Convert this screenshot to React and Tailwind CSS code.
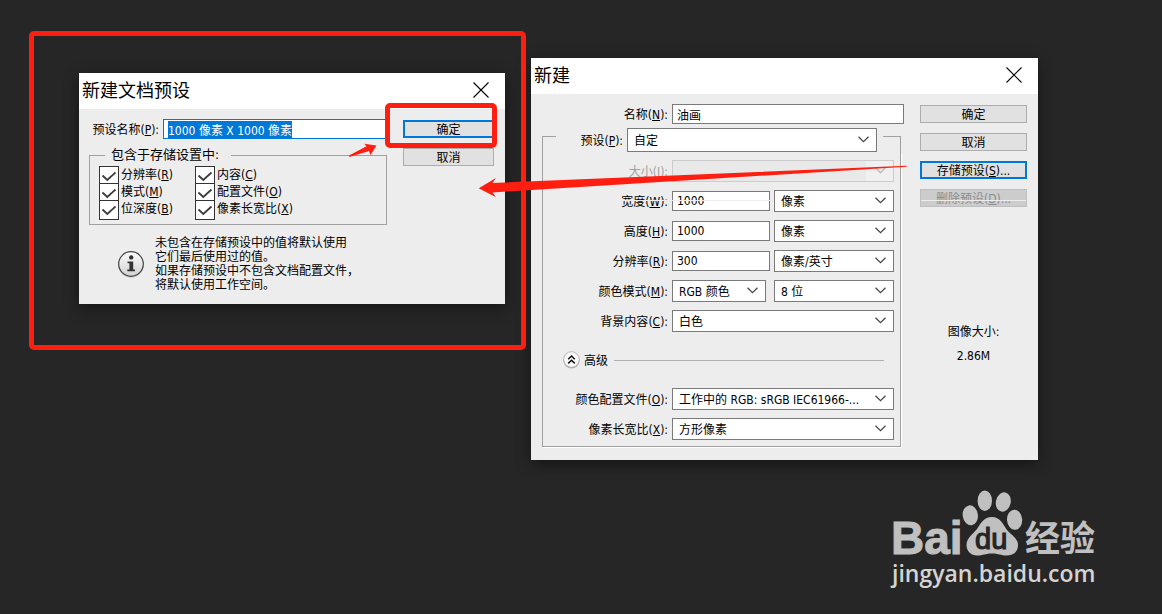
import React, { useEffect, useRef } from "react";

function CloseButton() {
  return (
    <button type="button" aria-label="关闭" className="flex h-6 w-6 items-center justify-center">
      <svg width="16" height="16" viewBox="0 0 16 16" className="block">
        <path d="M0.5 0.5 L15.5 15.5 M15.5 0.5 L0.5 15.5" stroke="#000" strokeWidth="1.1" fill="none" />
      </svg>
    </button>
  );
}

function TitleBar({ title }) {
  return (
    <header className="flex h-9 items-center justify-between bg-white pb-0.5 pl-[3px] pr-3">
      <h2 className="pt-0.5 text-[18px] leading-6 font-normal">{title}</h2>
      <CloseButton />
    </header>
  );
}

function PushButton({ primary, disabled, children }) {
  const look = disabled
    ? "border border-[#bfbfbf] bg-[#cccccc] text-[#8c8c8c]"
    : primary
      ? "border-2 border-[#0078d7] bg-[#e1e1e1]"
      : "border border-[#adadad] bg-[#e1e1e1]";
  return (
    <button
      type="button"
      disabled={disabled}
      className={"relative flex h-[18px] w-full items-center justify-center whitespace-nowrap pt-0.5 leading-4 " + look}
    >
      {children}
    </button>
  );
}

function Caption({ htmlFor, text, hotkey, disabled, className = "" }) {
  return (
    <label htmlFor={htmlFor} className={"whitespace-nowrap pt-0.5 text-right " + (disabled ? "text-[#a0a0a0] " : "") + className}>
      {text}(<span className="underline">{hotkey}</span>):
    </label>
  );
}

function Select({ id, label, value, disabled, className = "", height = "h-[22px]" }) {
  return (
    <div className={"relative " + className}>
      <select
        id={id}
        aria-label={label}
        disabled={disabled}
        defaultValue={value}
        className={
          "block w-full appearance-none truncate border pl-1.5 pr-7 pt-0.5 opacity-100 " +
          height +
          (disabled
            ? " border-[#cccccc] bg-[linear-gradient(90deg,#e9e9e9_calc(100%-27px),#f0f0f0_0)]"
            : " border-[#7a7a7a] bg-white")
        }
      >
        <option>{value}</option>
      </select>
      <svg
        width="11"
        height="7"
        viewBox="0 0 11 7"
        className="pointer-events-none absolute right-2 top-1/2 -mt-1"
      >
        <path d="M0.5 0.8 L5.5 5.6 L10.5 0.8" fill="none" stroke={disabled ? "#b5b5b5" : "#444"} strokeWidth="1.2" />
      </svg>
    </div>
  );
}

function TextField({ id, value, className = "" }) {
  return (
    <input
      id={id}
      type="text"
      defaultValue={value}
      className={"block h-5 w-full min-w-0 border border-[#7a7a7a] bg-white px-1 " + className}
    />
  );
}

function Row({ children }) {
  return <div className="relative grid grid-cols-[125px_minmax(0,1fr)] items-center gap-x-1">{children}</div>;
}

function CheckItem({ id, text, hotkey }) {
  return (
    <div className="flex h-[17px] items-start gap-0.5">
      <span className="relative -mb-[3px] h-5 w-5 shrink-0">
        <input
          id={id}
          type="checkbox"
          defaultChecked
          className="peer block h-5 w-5 appearance-none border border-[#333] bg-white"
        />
        <svg
          viewBox="0 0 20 20"
          className="pointer-events-none absolute inset-0 hidden h-5 w-5 peer-checked:block"
        >
          <path d="M3.5 9.5 L8.3 14 L16.5 6.5" fill="none" stroke="#3c3c3c" strokeWidth="1.8" />
        </svg>
      </span>
      <label htmlFor={id} className="whitespace-nowrap leading-[18px]">
        {text}(<span className="underline">{hotkey}</span>)
      </label>
    </div>
  );
}

function PresetDialog() {
  const nameRef = useRef(null);
  useEffect(() => {
    nameRef.current.focus();
    nameRef.current.select();
  }, []);

  return (
    <section className="absolute left-[79px] top-[73px] w-[426px] bg-[#ededed] shadow-[0_4px_14px_rgba(0,0,0,0.45)]">
      <TitleBar title="新建文档预设" />
      <div className="flex gap-4 px-[11px] pb-3 pt-2.5">
        <div className="-ml-px min-w-0 flex-1">
          <div className="flex items-center gap-1">
            <Caption htmlFor="preset-name" text="预设名称" hotkey="P" className="w-[70px]" />
            <input
              ref={nameRef}
              id="preset-name"
              type="text"
              defaultValue="1000 像素 X 1000 像素"
              className="h-5 min-w-0 flex-1 border border-[#0078d7] bg-white px-1 outline-none selection:bg-[#0078d7] selection:text-white"
            />
          </div>
          <fieldset className="mt-2 border border-[#a0a0a0] pb-[7px] pl-[9px] pt-[3px]">
            <legend className="ml-1.5 pl-1.5 pr-3 text-[13px] leading-4">包含于存储设置中:</legend>
            <div className="grid grid-cols-[96px_1fr]">
              <CheckItem id="inc-res" text="分辨率" hotkey="R" />
              <CheckItem id="inc-content" text="内容" hotkey="C" />
              <CheckItem id="inc-mode" text="模式" hotkey="M" />
              <CheckItem id="inc-profile" text="配置文件" hotkey="O" />
              <CheckItem id="inc-depth" text="位深度" hotkey="B" />
              <CheckItem id="inc-ratio" text="像素长宽比" hotkey="X" />
            </div>
          </fieldset>
          <div className="mt-[11px] flex items-center gap-2.5 pl-7">
            <svg width="28" height="28" viewBox="0 0 28 28" className="shrink-0">
              <defs>
                <linearGradient id="info-fill" x1="0" y1="0" x2="0" y2="1">
                  <stop offset="0" stopColor="#fdfdfd" />
                  <stop offset="1" stopColor="#d2d2d2" />
                </linearGradient>
              </defs>
              <circle cx="14" cy="15" r="12.6" fill="#c4c4c4" />
              <circle cx="14" cy="14" r="12.3" fill="url(#info-fill)" stroke="#444" strokeWidth="1.2" />
              <circle cx="14.2" cy="7.4" r="2.2" fill="#333" />
              <path d="M10.5 11.5 H16.2 V19.5 H18 V21.2 H10.3 V19.5 H12.4 V13.2 H10.5 Z" fill="#333" />
            </svg>
            <p className="whitespace-nowrap leading-[14px]">
              未包含在存储预设中的值将默认使用
              <br />
              它们最后使用过的值。
              <br />
              如果存储预设中不包含文档配置文件，
              <br />
              将默认使用工作空间。
            </p>
          </div>
        </div>
        <div className="flex w-[91px] shrink-0 flex-col gap-2.5 pt-px">
          <PushButton primary>确定</PushButton>
          <PushButton>取消</PushButton>
        </div>
      </div>
    </section>
  );
}

function NewDialog() {
  return (
    <section className="absolute left-[531px] top-[58px] w-[507px] bg-[#ededed] shadow-[0_4px_14px_rgba(0,0,0,0.45)]">
      <TitleBar title="新建" />
      <div className="flex gap-4 px-[11px] pb-[13px] pt-2.5">
        <div className="min-w-0 flex-1">
          <div className="grid grid-cols-[126px_minmax(0,1fr)] items-center gap-x-1">
            <Caption htmlFor="doc-name" text="名称" hotkey="N" />
            <TextField id="doc-name" value="油画" />
          </div>

          <div className="mr-[3px] mt-1">
            <div className="flex">
              <div className="mt-2 w-3.5 border-l border-t border-[#a0a0a0]" />
              <div className="flex flex-1 items-center justify-end gap-1 pr-1.5">
                <Caption htmlFor="preset" text="预设" hotkey="P" />
                <Select id="preset" value="自定" className="w-[250px]" height="h-6" />
              </div>
              <div className="mt-2 w-[18px] border-r border-t border-[#a0a0a0]" />
            </div>

            <div className="flex flex-col gap-2 border-x border-b border-[#a0a0a0] pb-1.5 pr-1.5 pt-2 shadow-[1px_1px_0_#fff]">
              <Row>
                <Caption htmlFor="size" text="大小" hotkey="I" disabled />
                <Select id="size" value="" disabled />
              </Row>
              <Row>
                <Caption htmlFor="width" text="宽度" hotkey="W" />
                <div className="flex items-center gap-1">
                  <TextField id="width" value="1000" className="flex-1" />
                  <Select label="宽度单位" value="像素" className="w-[120px] shrink-0" />
                </div>
                <span className="pointer-events-none absolute left-[72px] right-[124px] top-2.5 h-px bg-[#ededed]" />
              </Row>
              <Row>
                <Caption htmlFor="height" text="高度" hotkey="H" />
                <div className="flex items-center gap-1">
                  <TextField id="height" value="1000" className="flex-1" />
                  <Select label="高度单位" value="像素" className="w-[120px] shrink-0" />
                </div>
              </Row>
              <Row>
                <Caption htmlFor="resolution" text="分辨率" hotkey="R" />
                <div className="flex items-center gap-1">
                  <TextField id="resolution" value="300" className="flex-1" />
                  <Select label="分辨率单位" value="像素/英寸" className="w-[120px] shrink-0" />
                </div>
              </Row>
              <Row>
                <Caption htmlFor="mode" text="颜色模式" hotkey="M" />
                <div className="flex items-center gap-2">
                  <Select id="mode" value="RGB 颜色" className="min-w-0 flex-1" />
                  <Select label="位深度" value="8 位" className="w-[120px] shrink-0" />
                </div>
              </Row>
              <Row>
                <Caption htmlFor="background" text="背景内容" hotkey="C" />
                <Select id="background" value="白色" />
              </Row>

              <div className="flex h-10 items-center gap-1 pl-5 pr-2.5">
                <button type="button" aria-label="收起高级选项">
                  <svg width="17" height="18" viewBox="0 0 17 18" className="block">
                    <circle cx="8.5" cy="9.5" r="8" fill="#b5b5b5" />
                    <circle cx="8.5" cy="8.5" r="7.8" fill="#fafafa" stroke="#a8a8a8" strokeWidth="0.8" />
                    <path d="M5.2 8.2 L8.5 5 L11.8 8.2 M5.2 12.4 L8.5 9.2 L11.8 12.4" fill="none" stroke="#111" strokeWidth="1.5" />
                  </svg>
                </button>
                <span className="pt-0.5">高级</span>
                <span className="ml-0.5 h-px flex-1 bg-[#b0b0b0]" />
              </div>

              <Row>
                <Caption htmlFor="profile" text="颜色配置文件" hotkey="O" />
                <Select id="profile" value="工作中的 RGB: sRGB IEC61966-..." />
              </Row>
              <Row>
                <Caption htmlFor="ratio" text="像素长宽比" hotkey="X" />
                <Select id="ratio" value="方形像素" />
              </Row>
            </div>
          </div>
        </div>

        <div className="flex w-[107px] shrink-0 flex-col gap-2.5 pt-px">
          <PushButton>确定</PushButton>
          <PushButton>取消</PushButton>
          <PushButton primary>
            存储预设(<span className="underline">S</span>)...
          </PushButton>
          <PushButton disabled>
            删除预设(<span className="underline">D</span>)...
            <span className="absolute inset-x-0 top-2.5 h-px bg-[#ededed]" />
          </PushButton>
          <div className="mt-[103px] text-center leading-6">
            <div>图像大小:</div>
            <div>2.86M</div>
          </div>
        </div>
      </div>
    </section>
  );
}

function Annotations() {
  return (
    <>
      <div className="pointer-events-none absolute left-[29px] top-[31px] h-[319px] w-[497px] rounded-[5px] border-[5px] border-[#ff1e10]" />
      <div className="pointer-events-none absolute left-[385px] top-[103px] h-[45px] w-[112px] rounded-[5px] border-[5px] border-[#ff1e10]" />
      <svg
        width="560"
        height="60"
        viewBox="349 140 560 60"
        className="pointer-events-none absolute left-[349px] top-[140px]"
        fill="#ff1e10"
      >
        <path d="M349 155.5 L366.5 146.3 L364.3 143.7 L376.5 145.5 L370.5 155 L369 151 L349.5 157 Z" />
        <path d="M478.7 188.3 L496 178 L492.5 183 L906.5 165.8 L906.5 166.8 L492.5 192.4 L496 197.3 Z" />
      </svg>
    </>
  );
}

function Watermark() {
  return (
    <svg
      width="230"
      height="120"
      viewBox="0 0 230 120"
      className="absolute bottom-[14px] right-[52px]"
      fill="#c0c0c0"
    >
      <text x="11" y="74" fontFamily="'Liberation Sans', sans-serif" fontWeight="700" fontSize="46" stroke="#c0c0c0" strokeWidth="1">
        Bai
      </text>
      <ellipse cx="90.3" cy="35.3" rx="7.6" ry="10" transform="rotate(-8 90.3 35.3)" />
      <ellipse cx="104.8" cy="20.7" rx="7.2" ry="10.2" />
      <ellipse cx="123.3" cy="22" rx="7.4" ry="9.8" transform="rotate(12 123.3 22)" />
      <ellipse cx="134.6" cy="39.8" rx="7.6" ry="10" transform="rotate(-4 134.6 39.8)" />
      <path d="M112 37 C120 37 123 44 127 50 C131 55 138 58 138 65 C138 72 133 75.5 127 75.5 C121 75.5 118 73.5 112 73.5 C106 73.5 103 75.5 97 75.5 C91 75.5 86.5 71 86.5 65 C86.5 58 93 54 97 49 C101 43 104 37 112 37 Z" />
      <text x="95" y="69" fontFamily="'Liberation Sans', sans-serif" fontSize="29" fill="#262626" stroke="#262626" strokeWidth="1.2">
        du
      </text>
      <text x="145" y="71" fontFamily="'Noto Sans CJK SC', sans-serif" fontWeight="700" fontSize="35">
        经验
      </text>
      <text x="12" y="102" fontFamily="'Open Sans', 'Noto Sans', sans-serif" fontWeight="600" fontSize="23" fill="#d4d4d4">
        jingyan.baidu.com
      </text>
    </svg>
  );
}

export default function App() {
  return (
    <main className="relative min-h-screen overflow-hidden bg-[#262626] font-['DejaVu_Sans_Condensed','Noto_Sans','Noto_Sans_CJK_SC',sans-serif] text-[12px] leading-4 text-black">
      <NewDialog />
      <PresetDialog />
      <Annotations />
      <Watermark />
    </main>
  );
}
